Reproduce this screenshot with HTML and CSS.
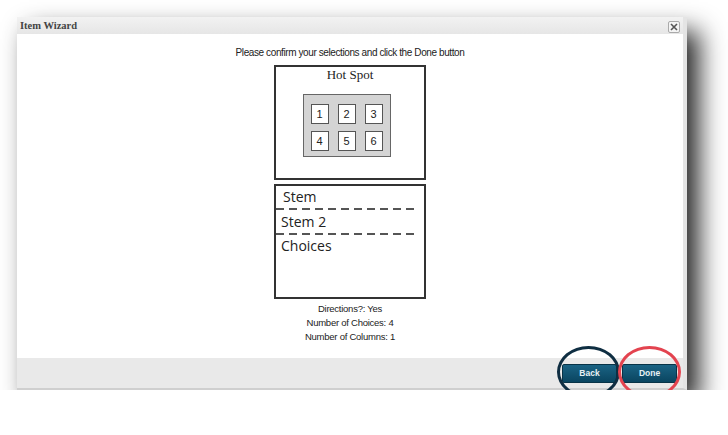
FILE: index.html
```html
<!DOCTYPE html>
<html lang="en">
<head>
  <meta charset="UTF-8">
  <title>Item Wizard</title>
  <link rel="stylesheet" href="styles.css">
</head>
<body>
  <div class="dialogo">
    <div class="barra-titulo">
      <span class="titulo">Item Wizard</span>
      <span class="cerrar">
        <svg width="8" height="8" viewBox="0 0 8 8"><path d="M1 1 L7 7 M7 1 L1 7" stroke="#555" stroke-width="1.6"/></svg>
      </span>
    </div>

    <div class="contenido">
      <p class="aviso">Please confirm your selections and click the Done button</p>

      <div class="vista hotspot">
        <div class="hs-titulo">Hot Spot</div>
        <div class="hs-grilla">
          <span>1</span><span>2</span><span>3</span>
          <span>4</span><span>5</span><span>6</span>
        </div>
      </div>

      <div class="vista secciones">
        <div class="seccion linea">Stem</div>
        <div class="seccion linea">Stem 2</div>
        <div class="seccion">Choices</div>
      </div>

      <div class="resumen">
        <div>Directions?: Yes</div>
        <div>Number of Choices: 4</div>
        <div>Number of Columns: 1</div>
      </div>
    </div>

    <div class="pie">
      <button class="boton">Back<span class="marca azul"></span></button>
      <button class="boton">Done<span class="marca roja"></span></button>
    </div>
  </div>
</body>
</html>
```

FILE: styles.css
```css
body {
  margin: 0;
  background: #ffffff;
  font-family: "Liberation Sans", Arial, sans-serif;
  color: #222;
}

.dialogo {
  margin: 17px 0 0 17px;
  width: 666px;
  height: 371px;
  display: flex;
  flex-direction: column;
  background: #fff;
  border-right: 4px solid #e4e4e4;
  border-bottom: 2px solid #cfcfcf;
  box-shadow: 12px 14px 24px rgba(0, 0, 0, 0.85);
}

.barra-titulo {
  height: 17px;
  display: flex;
  align-items: center;
  justify-content: space-between;
  padding: 0 3px 0 3px;
  background: linear-gradient(#f2f2f2, #e6e6e6);
}

.titulo {
  font-family: "Liberation Serif", serif;
  font-weight: bold;
  font-size: 10.5px;
  color: #444;
}

.cerrar {
  width: 10px;
  height: 10px;
  display: flex;
  align-items: center;
  justify-content: center;
  border: 1px solid #aaa;
  border-radius: 2px;
  background: #f4f4f4;
  margin-top: 2px;
}

.contenido {
  flex: 1;
  display: flex;
  flex-direction: column;
  align-items: center;
}

.aviso {
  margin: 13px 0 6px;
  font-size: 10px;
  letter-spacing: -0.4px;
  line-height: 12px;
}

.vista {
  width: 148px;
  height: 111px;
  border: 2px solid #333;
  box-sizing: content-box;
}

.hotspot {
  display: flex;
  flex-direction: column;
  align-items: center;
  margin-bottom: 4px;
}

.hs-titulo {
  font-family: "Liberation Serif", serif;
  font-size: 13px;
  line-height: 15px;
}

.hs-grilla {
  margin: 12px 7px 0 0;
  width: 88px;
  height: 63px;
  box-sizing: border-box;
  border: 1px solid #666;
  background: #d4d4d4;
  display: grid;
  grid-template-columns: repeat(3, 18px);
  grid-template-rows: repeat(2, 20px);
  column-gap: 9px;
  row-gap: 7px;
  padding: 9px 0 0 7px;
}

.hs-grilla span {
  background: #fff;
  border: 1px solid #555;
  box-sizing: border-box;
  font-size: 11px;
  display: flex;
  align-items: center;
  justify-content: center;
}

.secciones {
  padding: 0 8px 0 0;
  width: 140px;
}

.seccion {
  font-family: "Open Sans", sans-serif;
  font-size: 14px;
  line-height: 22px;
  padding-left: 5px;
}

.seccion:first-child {
  padding-left: 7px;
  line-height: 22px;
}

/* guiones largos como en el boceto original */
.linea {
  padding-bottom: 2px;
  background: repeating-linear-gradient(to right, #555 0 8px, transparent 8px 13px) left bottom / 100% 2px no-repeat;
}

.linea + .linea {
  line-height: 23px;
}

.resumen {
  margin-top: 3px;
  font-size: 9.5px;
  letter-spacing: -0.25px;
  line-height: 14px;
  text-align: center;
}

.pie {
  height: 30px;
  background: #e9e9e9;
  display: flex;
  justify-content: flex-end;
  align-items: center;
  gap: 5px;
  padding-right: 6px;
}

.boton {
  position: relative;
  width: 55px;
  height: 19px;
  border: 1px solid #083347;
  border-radius: 2px;
  background: linear-gradient(#1a6384, #0a4560);
  color: #e8f0f4;
  font-family: "Liberation Sans", Arial, sans-serif;
  font-weight: bold;
  font-size: 8.5px;
  padding: 0;
}

/* trazos a mano sobre los botones */
.marca {
  position: absolute;
  width: 57px;
  height: 46px;
  left: -6px;
  top: -19px;
  border-radius: 50%;
  border: 3px solid;
  pointer-events: none;
}

.azul {
  border-color: #0f2e42;
}

.roja {
  border-color: #e3434f;
  left: -5px;
}
```
